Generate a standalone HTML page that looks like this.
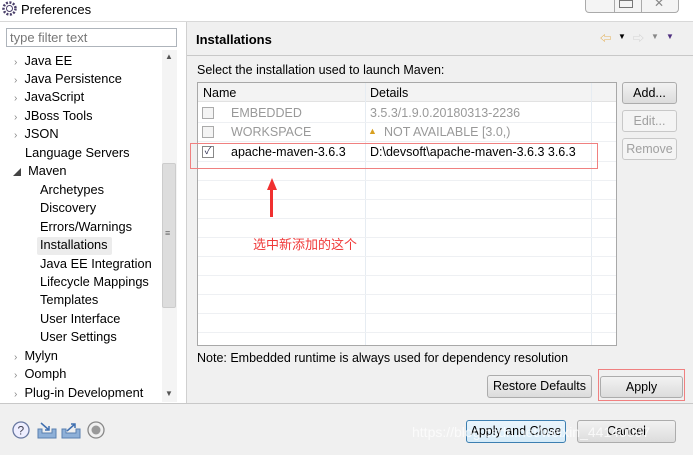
<!DOCTYPE html>
<html><head><meta charset="utf-8"><style>
*{margin:0;padding:0;box-sizing:border-box}
body{width:693px;height:455px;overflow:hidden;background:#f0f0f0;font-family:"Liberation Sans","Noto Sans CJK SC",sans-serif;font-size:12.5px;color:#000;position:relative}
.a{position:absolute;white-space:nowrap}
.btn{position:absolute;border:1px solid #acacac;border-radius:3px;background:linear-gradient(#f2f2f2,#dcdcdc);text-align:center;font-size:12.5px}
.dis{color:#a0a0a0;background:#f4f4f4;border-color:#c8c8c8}
.tree div{position:absolute;white-space:nowrap}
.arr{color:#888;font-size:10px}
.row{position:absolute;left:198px;width:418px;height:1px;background:#eef0f3}
</style></head><body>
<div class="a" style="left:0;top:0;width:693px;height:21px;background:#fff"></div>
<svg class="a" style="left:2px;top:1px" width="15" height="15"><circle cx="7.5" cy="7.5" r="6" fill="none" stroke="#4a3f6a" stroke-width="2.5" stroke-dasharray="2 1.5"/><circle cx="7.5" cy="7.5" r="3" fill="#fff" stroke="#4a3f6a"/></svg>
<div class="a" style="left:21px;top:2px;font-size:13px">Preferences</div>
<div class="a" style="left:585px;top:0;width:94px;height:13px;border:1px solid #aaa;border-top:none;border-radius:0 0 4px 4px;background:#f4f4f4"></div>
<div class="a" style="left:614px;top:0;width:1px;height:13px;background:#aaa"></div>
<div class="a" style="left:641px;top:0;width:1px;height:13px;background:#aaa"></div>
<div class="a" style="left:619px;top:0;width:14px;height:8px;border:1px solid #777"></div>
<div class="a" style="left:654px;top:-4px;color:#888;font-size:12px">✕</div>
<div class="a" style="left:0;top:21px;width:186px;height:383px;background:#fff"></div>
<div class="a" style="left:186px;top:21px;width:1px;height:383px;background:#d0d0d0"></div>
<div class="a" style="left:0;top:21px;width:693px;height:1px;background:#d8d8d8"></div>
<div class="a" style="left:6px;top:28px;width:171px;height:19px;border:1px solid #aeb4bb;background:#fff;color:#777;padding:1px 3px;font-size:13px">type filter text</div>
<div class="a" style="left:162px;top:50px;width:15px;height:352px;background:#f4f4f4"></div>
<div class="a" style="left:162px;top:163px;width:14px;height:145px;background:#ddd;border:1px solid #ccc;border-radius:2px"></div>
<div class="a" style="left:165px;top:52px;font-size:8px;color:#555">▲</div>
<div class="a" style="left:165px;top:389px;font-size:8px;color:#555">▼</div>
<div class="a" style="left:165px;top:228px;font-size:9px;color:#666">≡</div>
<div class="a" style="left:37px;top:237px;width:75px;height:18px;background:#ececec;border-radius:2px"></div>
<div class="tree" style="font-size:12.8px">
<div style="left:14px;top:53px"><span class="arr">›</span>&nbsp; Java EE</div>
<div style="left:14px;top:71px"><span class="arr">›</span>&nbsp; Java Persistence</div>
<div style="left:14px;top:89px"><span class="arr">›</span>&nbsp; JavaScript</div>
<div style="left:14px;top:108px"><span class="arr">›</span>&nbsp; JBoss Tools</div>
<div style="left:14px;top:126px"><span class="arr">›</span>&nbsp; JSON</div>
<div style="left:25px;top:145px">Language Servers</div>
<div style="left:13px;top:163px"><span style="font-size:8px;color:#444">◢</span>&nbsp; Maven</div>
<div style="left:40px;top:182px">Archetypes</div>
<div style="left:40px;top:200px">Discovery</div>
<div style="left:40px;top:219px">Errors/Warnings</div>
<div style="left:40px;top:237px">Installations</div>
<div style="left:40px;top:256px">Java EE Integration</div>
<div style="left:40px;top:274px">Lifecycle Mappings</div>
<div style="left:40px;top:292px">Templates</div>
<div style="left:40px;top:311px">User Interface</div>
<div style="left:40px;top:329px">User Settings</div>
<div style="left:14px;top:348px"><span class="arr">›</span>&nbsp; Mylyn</div>
<div style="left:14px;top:366px"><span class="arr">›</span>&nbsp; Oomph</div>
<div style="left:14px;top:385px"><span class="arr">›</span>&nbsp; Plug-in Development</div>
</div>
<div class="a" style="left:196px;top:32px;font-weight:bold;font-size:13px">Installations</div>
<div class="a" style="left:187px;top:55px;width:506px;height:1px;background:#c8c8c8"></div>
<div class="a" style="left:600px;top:30px;font-size:11px;color:#e0a030">⇦</div>
<div class="a" style="left:618px;top:32px;font-size:8px">▼</div>
<div class="a" style="left:633px;top:30px;font-size:11px;color:#ccc">⇨</div>
<div class="a" style="left:651px;top:32px;font-size:8px;color:#888">▼</div>
<div class="a" style="left:666px;top:32px;font-size:8px;color:#503080">▼</div>
<div class="a" style="left:197px;top:63px">Select the installation used to launch Maven:</div>
<div class="a" style="left:197px;top:82px;width:420px;height:264px;background:#fff;border:1px solid #a8a8a8"></div>
<div class="a" style="left:198px;top:83px;width:418px;height:19px;background:#f3f3f3;border-bottom:1px solid #e2e2e2"></div>
<div class="a" style="left:365px;top:83px;width:1px;height:262px;background:#e6ecf2"></div>
<div class="a" style="left:591px;top:83px;width:1px;height:262px;background:#e6ecf2"></div>
<div class="a" style="left:203px;top:86px">Name</div>
<div class="a" style="left:370px;top:86px">Details</div>
<div class="row" style="top:122px"></div><div class="row" style="top:141px"></div><div class="row" style="top:161px"></div><div class="row" style="top:180px"></div><div class="row" style="top:199px"></div><div class="row" style="top:218px"></div><div class="row" style="top:237px"></div><div class="row" style="top:256px"></div><div class="row" style="top:275px"></div><div class="row" style="top:294px"></div><div class="row" style="top:313px"></div><div class="row" style="top:332px"></div>
<div class="a" style="left:202px;top:107px;width:12px;height:12px;border:1px solid #aaa;background:#f4f4f4"></div>
<div class="a" style="left:202px;top:126px;width:12px;height:12px;border:1px solid #aaa;background:#f4f4f4"></div>
<div class="a" style="left:202px;top:146px;width:12px;height:12px;border:1px solid #888;background:#fff;font-size:10px;line-height:10px;color:#335;text-align:center">✓</div>
<div class="a" style="left:231px;top:106px;color:#999">EMBEDDED</div>
<div class="a" style="left:231px;top:125px;color:#999">WORKSPACE</div>
<div class="a" style="left:231px;top:145px">apache-maven-3.6.3</div>
<div class="a" style="left:370px;top:106px;color:#999">3.5.3/1.9.0.20180313-2236</div>
<div class="a" style="left:368px;top:126px;color:#d8a020;font-size:9px">▲</div>
<div class="a" style="left:384px;top:125px;color:#999">NOT AVAILABLE [3.0,)</div>
<div class="a" style="left:370px;top:145px">D:\devsoft\apache-maven-3.6.3 3.6.3</div>
<div class="a" style="left:190px;top:143px;width:408px;height:26px;border:1px solid #f08080"></div>
<div class="a" style="left:267px;top:178px;width:0;height:0;border-left:5px solid transparent;border-right:5px solid transparent;border-bottom:12px solid #f03030"></div>
<div class="a" style="left:270px;top:189px;width:3px;height:28px;background:#f03030"></div>
<div class="a" style="left:253px;top:234px;color:#f03a3a;font-size:13px">选中新添加的这个</div>
<div class="btn" style="left:622px;top:82px;width:55px;height:22px;line-height:20px">Add...</div>
<div class="btn dis" style="left:622px;top:110px;width:55px;height:22px;line-height:20px">Edit...</div>
<div class="btn dis" style="left:622px;top:138px;width:55px;height:22px;line-height:20px">Remove</div>
<div class="a" style="left:197px;top:351px">Note: Embedded runtime is always used for dependency resolution</div>
<div class="btn" style="left:487px;top:375px;width:105px;height:23px;line-height:21px">Restore Defaults</div>
<div class="btn" style="left:600px;top:376px;width:83px;height:22px;line-height:21px">Apply</div>
<div class="a" style="left:598px;top:369px;width:87px;height:32px;border:1px solid #f08080"></div>
<div class="a" style="left:0;top:403px;width:693px;height:1px;background:#c8c8c8"></div>
<svg class="a" style="left:12px;top:420px" width="100" height="22">
<circle cx="9" cy="10" r="8" fill="#eef" stroke="#6878a0" stroke-width="1.3"/><text x="5.5" y="14.5" font-size="12" font-family="Liberation Sans" fill="#445">?</text>
<path d="M26 9v9h18v-9h-4v4h-10v-4z" fill="#8eb0d8" stroke="#5a80b0"/><path d="M29 3l8 7M37 6v4h-4" stroke="#4070b0" fill="none" stroke-width="1.5"/>
<path d="M50 9v9h18v-9h-4v4h-10v-4z" fill="#8eb0d8" stroke="#5a80b0"/><path d="M55 11l8-7M59 4h4v4" stroke="#4070b0" fill="none" stroke-width="1.5"/>
<circle cx="84" cy="10" r="8" fill="#f0f0f0" stroke="#888" stroke-width="1.3"/><circle cx="84" cy="10" r="4.5" fill="#999"/>
</svg>
<div class="btn" style="left:466px;top:420px;width:100px;height:23px;line-height:21px;border-color:#3c7fb1;background:linear-gradient(#eaf5fc,#d6ebf8)">Apply and Close</div>
<div class="btn" style="left:577px;top:420px;width:99px;height:23px;line-height:21px">Cancel</div>
<div class="a" style="left:412px;top:424px;color:rgba(255,255,255,0.75);font-size:14px">https://blog.csdn.net/weixin_44140097</div>
</body></html>
